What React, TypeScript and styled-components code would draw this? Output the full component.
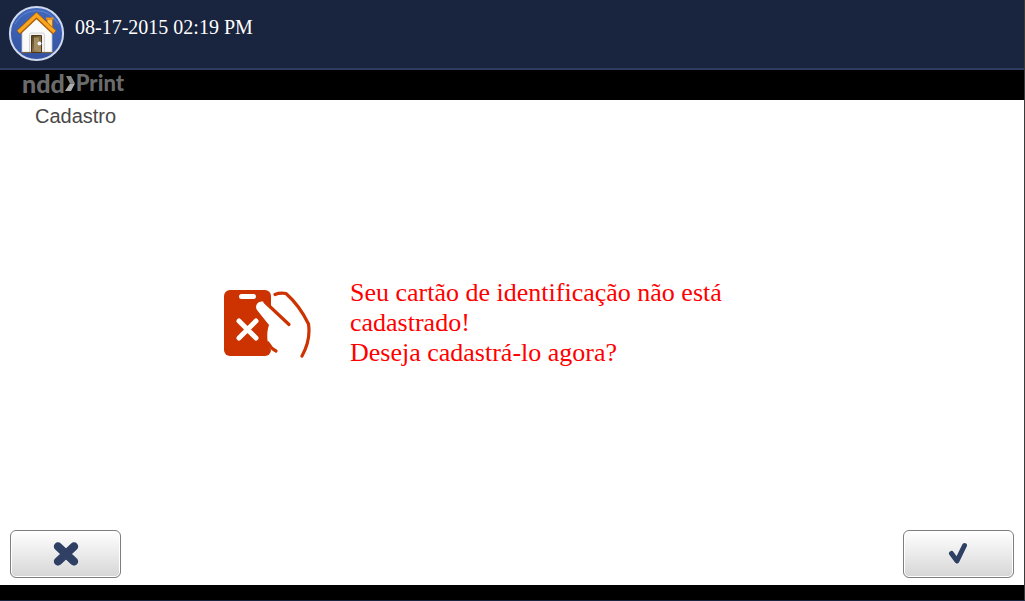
import React from "react";
import styled, { createGlobalStyle } from "styled-components";

const GlobalStyle = createGlobalStyle`
  *, *::before, *::after { box-sizing: border-box; }
  body { margin: 0; background: #fff; }
`;

const Page = styled.div`
  display: flex;
  flex-direction: column;
  min-height: 100vh;
  border-right: 1px solid #3a3a3a;
  border-bottom: 1px solid #19243e;
`;

const TopBar = styled.header`
  display: flex;
  align-items: flex-start;
  gap: 10px;
  height: 70px;
  padding: 5px 8px;
  background: #19243e;
  border-bottom: 2px solid #2d3b5e;
`;

const HomeButton = styled.button`
  display: block;
  width: 57px;
  height: 57px;
  padding: 0;
  border: 0;
  background: none;
  cursor: pointer;
`;

const Clock = styled.time`
  padding-top: 10px;
  color: #fff;
  font: 20px/24px "Liberation Serif", "Times New Roman", serif;
`;

const BrandBar = styled.div`
  display: flex;
  align-items: center;
  height: 30px;
  padding: 0 22px 4px;
  background: #000;
  color: #6b6b6b;
`;

const BrandWord = styled.span<{ $size: number }>`
  font: 900 ${(p) => p.$size}px/26px Lato, "Open Sans", sans-serif;
`;

const Content = styled.main`
  display: flex;
  flex: 1;
  flex-direction: column;
  background: #fff;
`;

const Title = styled.h1`
  margin: 0;
  padding: 4px 35px;
  color: #484848;
  font: 400 20px/24px "Liberation Sans", Arial, sans-serif;
`;

const Notice = styled.section`
  display: flex;
  flex: 1;
  align-items: center;
  justify-content: center;
  gap: 38px;
  padding: 0 80px 16px;
`;

const Message = styled.p`
  width: 450px;
  margin: 0;
  color: #f00;
  font: 26px/30px "Liberation Serif", "Times New Roman", serif;
`;

const Actions = styled.div`
  display: flex;
  justify-content: space-between;
  padding: 0 10px 7px;
`;

const ActionButton = styled.button`
  display: flex;
  align-items: center;
  justify-content: center;
  width: 111px;
  height: 48px;
  padding: 0;
  border: 1px solid #7e7e7e;
  border-radius: 6px;
  background: linear-gradient(#fff, #d6d6d6);
  box-shadow: inset 0 0 0 1px #fff;
  cursor: pointer;
`;

const Footer = styled.footer`
  height: 15px;
  background: #000;
`;

const HomeIcon = () => (
  <svg width="57" height="57" viewBox="0 0 57 57" aria-hidden="true">
    <defs>
      <linearGradient id="disc" x1="0" y1="0" x2="0" y2="1">
        <stop offset="0" stopColor="#4269bd" />
        <stop offset="1" stopColor="#3352a0" />
      </linearGradient>
      <linearGradient id="door" x1="0" y1="0" x2="1" y2="1">
        <stop offset="0" stopColor="#55401d" />
        <stop offset="1" stopColor="#b39a6b" />
      </linearGradient>
    </defs>
    <circle cx="28.5" cy="28.5" r="26.6" fill="url(#disc)" stroke="#cfd8ee" strokeWidth="2" />
    <path d="M7 19a24 24 0 0 1 43 0" fill="none" stroke="#5f85d0" strokeWidth="1" />
    <path d="M39 14h5.500v11l-5.500-5z" fill="#ffc34d" stroke="#b96a0b" />
    <path d="M38 13.500h7.500" stroke="#ef9416" strokeWidth="2" />
    <path d="M14 27 28.500 12 44 27v20.500H14z" fill="#fafafa" stroke="#bfc0c5" strokeWidth=".8" />
    <path d="M21.500 47V29.500q0-1.500 1.500-1.500h12q1.500 0 1.500 1.500V47" fill="#f3f3f3" stroke="#d4d4d4" />
    <path d="M13.500 47.500h31" stroke="#7a6440" strokeWidth="1.200" />
    <path d="M23.500 30.500h10v17h-10z" fill="url(#door)" stroke="#4c3818" />
    <path d="M26 32.500h5v13h-5z" fill="#a38d60" />
    <circle cx="31.500" cy="38.500" r="2" fill="#f1f3fa" />
    <path d="M10.500 27.500 28.500 10.500 46.500 27.500" fill="none" stroke="#a65f0c" strokeWidth="5.400" />
    <path d="M10.500 27 28.500 10 46.500 27" fill="none" stroke="#fba51c" strokeWidth="3.400" />
  </svg>
);

const BrandMark = () => (
  <svg width="11" height="17" viewBox="0 0 11 17" aria-hidden="true">
    <path d="M1 1h5l4 7.500H5z" fill="#858585" />
    <path d="M5 8.500h5L6 16H0z" fill="#adadad" />
  </svg>
);

const CardIcon = () => (
  <svg width="88" height="70" viewBox="0 0 88 70" aria-hidden="true">
    <rect x="0" y="2" width="47" height="66" rx="6" fill="#cc3300" />
    <rect x="15" y="6" width="17" height="5" rx="2.500" fill="#fff" />
    <path d="m15 33 17 17M32 33 15 50" stroke="#fff" strokeWidth="5" strokeLinecap="round" />
    <path
      d="M33 22c-3-5 2-10 7-8l7 5 20 18-6 26-9 1-5-2c-4-5-5-17-2-25z"
      fill="#fff"
    />
    <path d="m41 14 24 22.500" fill="none" stroke="#cc3300" strokeWidth="3.200" strokeLinecap="round" />
    <path d="M44 55c2 4 4 6 8 8" fill="none" stroke="#cc3300" strokeWidth="3.200" strokeLinecap="round" />
    <path
      d="M51 6.500q5-2 11-1c9 8 17 19 22.500 30.500 1.500 10-1 22-6.500 32"
      fill="none"
      stroke="#cc3300"
      strokeWidth="3.200"
      strokeLinecap="round"
      strokeLinejoin="round"
    />
  </svg>
);

const CrossIcon = () => (
  <svg width="26" height="26" viewBox="0 0 26 26" aria-hidden="true">
    <path d="m5 6 16 15M21 6 5 21" stroke="#fff" strokeWidth="8.400" strokeLinecap="round" />
    <path d="m5 5.500 16 15M21 5.500 5 20.500" stroke="#2f4064" strokeWidth="8.400" strokeLinecap="round" />
  </svg>
);

const CheckIcon = () => (
  <svg width="22" height="26" viewBox="0 0 22 26" aria-hidden="true">
    <path d="m4 13.500 5 7 7.500-15" fill="none" stroke="#fff" strokeWidth="5" strokeLinecap="round" strokeLinejoin="round" />
    <path d="m3.500 12.500 5.500 7.500 7.500-15.500" fill="none" stroke="#2f4064" strokeWidth="5" strokeLinecap="round" strokeLinejoin="round" />
  </svg>
);

export default function App() {
  return (
    <Page>
      <GlobalStyle />
      <TopBar>
        <HomeButton type="button" aria-label="Home">
          <HomeIcon />
        </HomeButton>
        <Clock dateTime="2015-08-17T14:19">08-17-2015 02:19 PM</Clock>
      </TopBar>
      <BrandBar>
        <BrandWord $size={25}>ndd</BrandWord>
        <BrandMark />
        <BrandWord $size={22}>Print</BrandWord>
      </BrandBar>
      <Content>
        <Title>Cadastro</Title>
        <Notice>
          <CardIcon />
          <Message>
            Seu cartão de identificação não está cadastrado!
            <br />
            Deseja cadastrá-lo agora?
          </Message>
        </Notice>
        <Actions>
          <ActionButton type="button" aria-label="Cancelar">
            <CrossIcon />
          </ActionButton>
          <ActionButton type="button" aria-label="Confirmar">
            <CheckIcon />
          </ActionButton>
        </Actions>
      </Content>
      <Footer />
    </Page>
  );
}
